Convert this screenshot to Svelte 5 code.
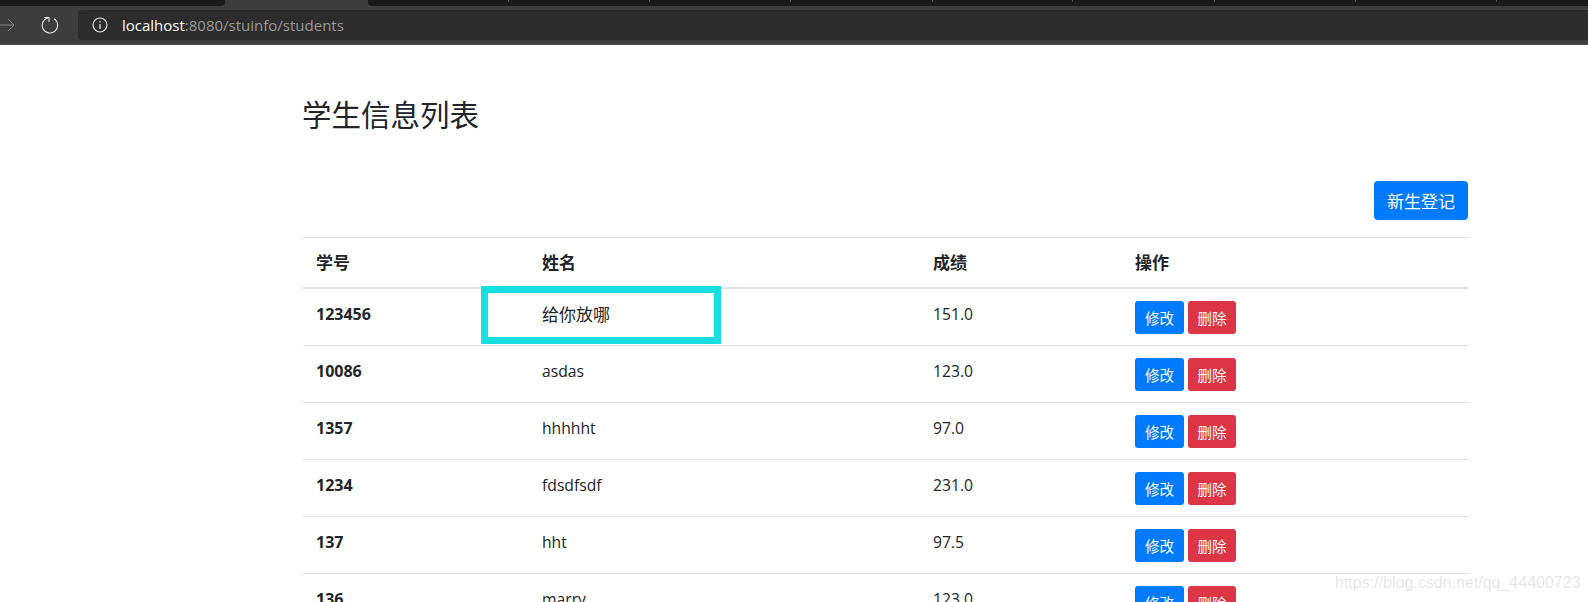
<script>
  const students = [
    { id: '123456', name: '给你放哪', score: '151.0', cjk: true },
    { id: '10086', name: 'asdas', score: '123.0' },
    { id: '1357', name: 'hhhhht', score: '97.0' },
    { id: '1234', name: 'fdsdfsdf', score: '231.0' },
    { id: '137', name: 'hht', score: '97.5' },
    { id: '136', name: 'marry', score: '123.0' }
  ];
  const tabStops = [508, 649, 790, 932, 1072, 1214, 1355, 1496];
</script>

<div class="page">
  <header class="chrome">
    <div class="tabstrip">
      <div class="tab left"></div>
      <div class="tab active"></div>
      <div class="tab rest">
        {#each tabStops as x}
          <span class="tick" style="left: {x - 368}px"></span>
        {/each}
      </div>
    </div>
    <div class="toolbar">
      <svg class="nav forward" width="16" height="14" viewBox="0 0 16 14">
        <path d="M0 7H14M8 1L14 7L8 13" fill="none" stroke="#858585" stroke-width="1" />
      </svg>
      <svg class="nav reload" width="18" height="18" viewBox="0 0 18 18">
        <path d="M8 1.7A7.7 7.7 0 1 0 13 2.8" fill="none" stroke="#e8e8e8" stroke-width="1.1" />
        <path d="M3.5 1.5H8V6" fill="none" stroke="#e8e8e8" stroke-width="1.1" />
      </svg>
      <div class="omnibox">
        <svg width="16" height="16" viewBox="0 0 16 16">
          <circle cx="8" cy="8" r="7" fill="none" stroke="#eee" stroke-width="1.1" />
          <path d="M8 7V12M8 4V5.4" fill="none" stroke="#eee" stroke-width="1.2" />
        </svg>
        <span class="url"><b>localhost</b>:8080/stuinfo/students</span>
      </div>
    </div>
  </header>

  <main class="container">
    <h2>学生信息列表</h2>
    <div class="actions"><button class="btn primary large">新生登记</button></div>
    <table>
      <colgroup>
        <col style="width: 226px" />
        <col style="width: 391px" />
        <col style="width: 202px" />
        <col />
      </colgroup>
      <thead>
        <tr><th>学号</th><th>姓名</th><th>成绩</th><th>操作</th></tr>
      </thead>
      <tbody>
        {#each students as s}
          <tr>
            <th>{s.id}</th>
            <td class:cjk={s.cjk}>{s.name}</td>
            <td>{s.score}</td>
            <td class="ops">
              <button class="btn primary">修改</button>
              <button class="btn danger">删除</button>
            </td>
          </tr>
        {/each}
      </tbody>
    </table>
  </main>

  <div class="highlight"></div>
  <div class="watermark">https://blog.csdn.net/qq_44400723</div>
</div>

<style>
  :global(body) {
    margin: 0;
    background: #fff;
  }

  .page {
    position: relative;
    height: 602px;
    overflow: hidden;
    color: #212529;
    font-family: "Open Sans", "Noto Sans CJK SC", sans-serif;
    font-size: 16px;
  }

  .chrome {
    background: #3d3d3d;
    height: 45px;
    border-bottom: 1px solid #4c4c4c;
    box-sizing: border-box;
  }

  .tabstrip {
    display: flex;
    height: 6px;
  }

  .tab.left {
    width: 225px;
    background: #1a1a1a;
    border-radius: 0 0 4px 0;
  }

  .tab.active {
    width: 143px;
    background: #3d3d3d;
  }

  .tab.rest {
    position: relative;
    flex: 1;
    background: #1a1a1a;
    border-radius: 0 0 0 4px;
  }

  .tick {
    position: absolute;
    top: 0;
    width: 1px;
    height: 2px;
    background: #555;
  }

  .toolbar {
    display: flex;
    align-items: center;
    height: 30px;
    margin-top: 4px;
  }

  .nav.forward {
    flex: none;
  }

  .nav.reload {
    margin-left: 25px;
    flex: none;
  }

  .omnibox {
    flex: 1;
    display: flex;
    align-items: center;
    gap: 15px;
    height: 30px;
    margin-left: 19px;
    padding-left: 14px;
    background: #2c2c2c;
    border-radius: 4px 0 0 4px;
  }

  .url {
    color: #9a9a9a;
    font-family: "Open Sans", sans-serif;
    font-size: 15px;
    margin-left: -1px;
  }

  .url b {
    color: #fff;
    font-weight: 400;
  }

  .container {
    margin-left: 303px;
    width: 1165px;
  }

  h2 {
    margin: 0 0 0 -1px;
    padding-top: 51px;
    font-size: 29.5px;
    font-weight: 400;
    line-height: 38px;
  }

  .actions {
    display: flex;
    justify-content: flex-end;
    margin-top: 47px;
  }

  .btn {
    border: 0;
    border-radius: 3px;
    color: #fff;
    font-family: inherit;
    font-size: 14.5px;
    padding: 0;
    width: 49px;
    height: 33px;
  }

  .btn.large {
    border-radius: 4px;
    font-size: 17px;
    width: 94px;
    height: 39px;
  }

  .primary {
    background: #007bff;
  }

  .danger {
    background: #dc3545;
    width: 48px;
  }

  table {
    width: 100%;
    margin-top: 17px;
    border-collapse: collapse;
    table-layout: fixed;
    font-size: 15.7px;
    line-height: 25px;
  }

  th,
  td {
    text-align: left;
    padding: 13px 13px 0;
    height: 57px;
    border-top: 1px solid #dee2e6;
    box-sizing: border-box;
    vertical-align: top;
    font-weight: 400;
  }

  th {
    font-weight: 700;
    font-size: 16px;
  }

  thead th {
    height: 50px;
    padding-top: 12px;
    font-size: 17px;
    border-bottom: 2px solid #dee2e6;
  }

  tbody tr:first-child > * {
    height: 58px;
  }

  .cjk {
    font-size: 17px;
  }

  td.ops {
    font-size: 0;
    padding-top: 12px;
  }

  .ops .btn + .btn {
    margin-left: 4px;
  }

  .highlight {
    position: absolute;
    left: 481px;
    top: 286px;
    width: 240px;
    height: 58px;
    box-sizing: border-box;
    border: 7px solid #17dfdf;
  }

  .watermark {
    position: absolute;
    left: 1335px;
    top: 574px;
    color: rgba(150, 150, 150, 0.25);
    font-family: "Liberation Sans", sans-serif;
    font-size: 16px;
    white-space: nowrap;
  }
</style>
